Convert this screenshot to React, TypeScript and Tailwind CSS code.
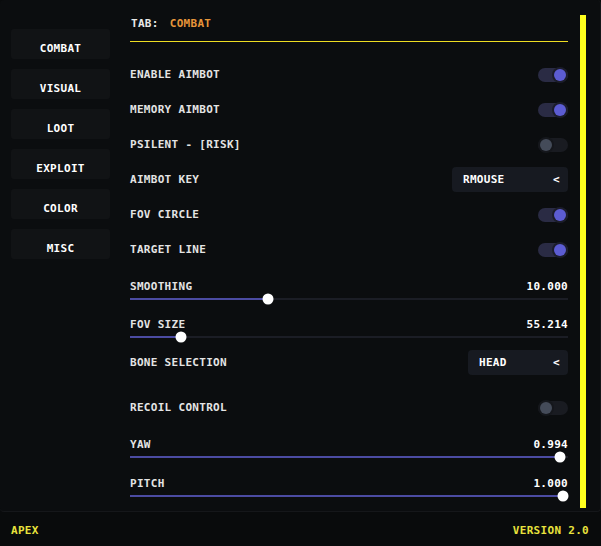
import { useState } from 'react';

const tabs = ['COMBAT', 'VISUAL', 'LOOT', 'EXPLOIT', 'COLOR', 'MISC'];

function Toggle({ on }: { on: boolean }) {
  return (
    <div
      className={
        'relative w-[30px] h-[14px] rounded-full ' +
        (on ? 'bg-[#2a2b44]' : 'bg-[#191b21]')
      }
    >
      <div
        className={
          'absolute top-1/2 -translate-y-1/2 w-[16px] h-[16px] rounded-full flex items-center justify-center ' +
          (on ? 'right-0 bg-[#1c1d2b]' : 'left-0 bg-[#15171c]')
        }
      >
        <div
          className={
            'w-[12px] h-[12px] rounded-full ' + (on ? 'bg-[#5c5cd2]' : 'bg-[#444b59]')
          }
        />
      </div>
    </div>
  );
}

function Row({ label, children, className = '' }: { label: string; children: React.ReactNode; className?: string }) {
  return (
    <div className={'h-[35px] flex items-center justify-between ' + className}>
      <span className="text-[#e4e4e4]">{label}</span>
      {children}
    </div>
  );
}

function Slider({
  label,
  value,
  pct,
  className = '',
}: {
  label: string;
  value: string;
  pct: number;
  className?: string;
}) {
  return (
    <div className={className}>
      <div className="h-[14px] flex items-center justify-between">
        <span className="text-[#e4e4e4]">{label}</span>
        <span className="text-white">{value}</span>
      </div>
      <div className="relative h-[12px]">
        <div className="absolute left-0 right-0 top-[5px] h-[2px] bg-[#1b1d25]" />
        <div className="absolute left-0 top-[5px] h-[2px] bg-[#4b4ba2]" style={{ width: `${pct}%` }} />
        <div
          className="absolute top-1/2 -translate-x-1/2 -translate-y-1/2 w-[11px] h-[11px] rounded-full bg-white"
          style={{ left: `${pct}%` }}
        />
      </div>
    </div>
  );
}

function Dropdown({ value, width }: { value: string; width: string }) {
  return (
    <div className={'h-[25px] rounded-[4px] bg-[#171a21] flex items-center justify-between pl-[11px] pr-[8px] ' + width}>
      <span className="text-white">{value}</span>
      <span className="text-white">&lt;</span>
    </div>
  );
}

export default function App() {
  const [active, setActive] = useState('COMBAT');

  return (
    <div className="w-[601px] h-[546px] bg-[#090b0c] flex flex-col font-['DejaVu_Sans_Mono',monospace] font-bold text-[11px] tracking-[0.3px] leading-none">
      <div className="h-[512px] flex bg-[#0b0d0f] border-b border-r border-[#15171a] rounded-[4px]">
        <div className="w-[130px] pl-[11px] pt-[29px] flex flex-col gap-[10px]">
          {tabs.map((t) => (
            <button
              key={t}
              onClick={() => setActive(t)}
              className="w-[99px] h-[30px] pt-[8px] rounded-[3px] bg-[#111315] text-white flex items-center justify-center"
            >
              {t}
            </button>
          ))}
        </div>

        <div className="w-[438px] flex flex-col">
          <div className="h-[41px] flex items-center pl-[1px] pt-[5px] gap-[11px]">
            <span className="text-[#e8e8e8]">TAB:</span>
            <span className="text-[#e8963a]">{active}</span>
          </div>
          <div className="h-[1px] bg-[#eedd22]" />

          <div className="pt-[15px] flex flex-col">
            <Row label="ENABLE AIMBOT">
              <Toggle on />
            </Row>
            <Row label="MEMORY AIMBOT">
              <Toggle on />
            </Row>
            <Row label="PSILENT - [RISK]">
              <Toggle on={false} />
            </Row>
            <Row label="AIMBOT KEY">
              <Dropdown value="RMOUSE" width="w-[116px]" />
            </Row>
            <Row label="FOV CIRCLE">
              <Toggle on />
            </Row>
            <Row label="TARGET LINE">
              <Toggle on />
            </Row>

            <Slider label="SMOOTHING" value="10.000" pct={31.5} className="mt-[12px]" />
            <Slider label="FOV SIZE" value="55.214" pct={11.6} className="mt-[12px]" />

            <Row label="BONE SELECTION" className="mt-[2px]">
              <Dropdown value="HEAD" width="w-[100px]" />
            </Row>
            <Row label="RECOIL CONTROL" className="mt-[10px]">
              <Toggle on={false} />
            </Row>

            <Slider label="YAW" value="0.994" pct={98.2} className="mt-[12px]" />
            <Slider label="PITCH" value="1.000" pct={98.9} className="mt-[13px]" />
          </div>
        </div>

        <div className="pl-[12px] pt-[15px]">
          <div className="w-[6px] h-[493px] bg-[#ffff1e]" />
        </div>
      </div>

      <div className="flex-1 flex items-center justify-between pl-[11px] pr-[12px] pt-[3px] text-[#e8e23c]">
        <span>APEX</span>
        <span>VERSION 2.0</span>
      </div>
    </div>
  );
}
